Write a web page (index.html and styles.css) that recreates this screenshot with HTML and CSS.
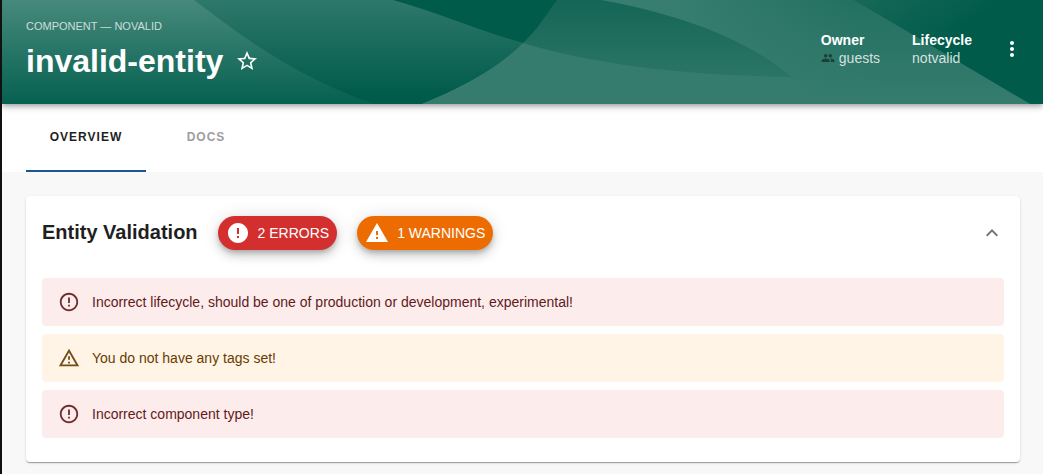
FILE: index.html
```html
<!DOCTYPE html>
<html lang="en">
<head>
<meta charset="utf-8">
<meta name="viewport" content="width=device-width, initial-scale=1">
<title>invalid-entity</title>
<link rel="stylesheet" href="styles.css">
</head>
<body class="page">
<header class="header">
  <svg class="header-waves" viewBox="0 0 1041 104" preserveAspectRatio="none" aria-hidden="true">
    <defs>
      <linearGradient id="left" x1="0" y1="0" x2="0" y2="1"><stop offset="0" stop-color="#47897c"/><stop offset="1" stop-color="#066150"/></linearGradient>
      <linearGradient id="fold" x1="0" y1="0" x2="0" y2="1"><stop offset="0" stop-color="#2e786a"/><stop offset="0.92" stop-color="#005b4b"/></linearGradient>
      <linearGradient id="upper" x1="0" y1="0" x2="0" y2="1"><stop offset="0" stop-color="#146656"/><stop offset="0.7" stop-color="#2a7465"/><stop offset="0.9" stop-color="#337b6d"/></linearGradient>
      <linearGradient id="slope" gradientUnits="userSpaceOnUse" x1="690" y1="60" x2="850" y2="0"><stop offset="0" stop-color="#377e70"/><stop offset="1" stop-color="#237061"/></linearGradient>
      <linearGradient id="slopefoot" x1="0" y1="0" x2="0" y2="1"><stop offset="0" stop-color="#357c6e" stop-opacity="0"/><stop offset="1" stop-color="#357c6e"/></linearGradient>
      <linearGradient id="corner" gradientUnits="userSpaceOnUse" x1="880" y1="-20" x2="935" y2="52"><stop offset="0" stop-color="#176858"/><stop offset="1" stop-color="#005b4b"/></linearGradient>
    </defs>
    <path fill="#005b4b" d="M0 0H1041V104H0z"/>
    <path fill="url(#fold)" d="M180 0H391C440 14 478 31 521 43C494 70 459 88 420 104H180z"/>
    <path fill="url(#left)" d="M0 0H192C236 33 292 77 372 104H0z"/>
    <path fill="url(#upper)" d="M555 0H852L1028 104H420C459 88 494 70 521 43C535 30 544 15 555 0z"/>
    <path fill="#357c6e" d="M521 43C585 62 655 71 730 75L830 79V104H420C459 88 494 70 521 43z"/>
    <path fill="url(#corner)" d="M852 0H1041V104H1028z"/>
    <path fill="url(#slope)" d="M599 0H852L1028 104H818C780 61 720 22 599 0z"/>
    <path fill="url(#slopefoot)" d="M599 0H852L1028 104H818C780 61 720 22 599 0z"/>
  </svg>
  <div class="header-title">
    <p class="kind">COMPONENT — NOVALID</p>
    <div class="name-row">
      <h1 class="name">invalid-entity</h1>
      <button class="icon-button" type="button" aria-label="Add to favorites">
        <svg class="icon" viewBox="0 0 24 24"><path d="M22 9.24l-7.19-.62L12 2 9.19 8.63 2 9.24l5.46 4.73L5.82 21 12 17.27 18.18 21l-1.63-7.03L22 9.24zM12 15.4l-3.76 2.27 1-4.28-3.32-2.88 4.38-.38L12 6.1l1.71 4.04 4.38.38-3.32 2.88 1 4.28L12 15.4z"/></svg>
      </button>
    </div>
  </div>
  <dl class="facts">
    <div class="fact">
      <dt class="fact-label">Owner</dt>
      <dd class="fact-value"><svg class="icon people" viewBox="0 0 24 24" aria-hidden="true"><path d="M16 11c1.66 0 2.99-1.34 2.99-3S17.66 5 16 5c-1.66 0-3 1.34-3 3s1.34 3 3 3zm-8 0c1.66 0 2.99-1.34 2.99-3S9.66 5 8 5C6.34 5 5 6.34 5 8s1.34 3 3 3zm0 2c-2.33 0-7 1.17-7 3.5V19h14v-2.5c0-2.33-4.67-3.5-7-3.5zm8 0c-.29 0-.62.02-.97.05 1.16.84 1.97 1.97 1.97 3.45V19h6v-2.5c0-2.33-4.67-3.5-7-3.5z"/></svg><a class="owner" href="#guests">guests</a></dd>
    </div>
    <div class="fact">
      <dt class="fact-label">Lifecycle</dt>
      <dd class="fact-value">notvalid</dd>
    </div>
  </dl>
  <button class="icon-button" type="button" aria-label="More">
    <svg class="icon" viewBox="0 0 24 24"><path d="M12 8c1.1 0 2-.9 2-2s-.9-2-2-2-2 .9-2 2 .9 2 2 2zm0 2c-1.1 0-2 .9-2 2s.9 2 2 2 2-.9 2-2-.9-2-2-2zm0 6c-1.1 0-2 .9-2 2s.9 2 2 2 2-.9 2-2-.9-2-2-2z"/></svg>
  </button>
</header>
<nav class="tabs">
  <a class="tab tab-active" href="#overview" aria-current="page">OVERVIEW</a>
  <a class="tab" href="#docs">DOCS</a>
</nav>
<main class="content">
  <section class="card">
    <div class="card-head">
      <h2 class="card-title">Entity Validation</h2>
      <button class="chip chip-error" type="button">
        <svg class="icon" viewBox="0 0 24 24" aria-hidden="true"><path d="M12 2C6.48 2 2 6.48 2 12s4.48 10 10 10 10-4.48 10-10S17.52 2 12 2zm1 15h-2v-2h2v2zm0-4h-2V7h2v6z"/></svg>2 ERRORS</button>
      <button class="chip chip-warning" type="button">
        <svg class="icon" viewBox="0 0 24 24" aria-hidden="true"><path d="M1 21h22L12 2 1 21zm12-3h-2v-2h2v2zm0-4h-2v-4h2v4z"/></svg>1 WARNINGS</button>
      <button class="icon-button toggle" type="button" aria-label="Collapse">
        <svg class="icon" viewBox="0 0 24 24"><path d="M12 8l-6 6 1.41 1.41L12 10.83l4.59 4.58L18 14z"/></svg>
      </button>
    </div>
    <ul class="alerts">
      <li class="alert alert-error"><svg class="icon alert-icon" viewBox="0 0 24 24" aria-hidden="true"><path d="M11 15h2v2h-2zm0-8h2v6h-2zm.99-5C6.47 2 2 6.48 2 12s4.47 10 9.99 10C17.52 22 22 17.52 22 12S17.52 2 11.99 2zM12 20c-4.42 0-8-3.58-8-8s3.58-8 8-8 8 3.58 8 8-3.58 8-8 8z"/></svg>Incorrect lifecycle, should be one of production or development, experimental!</li>
      <li class="alert alert-warning"><svg class="icon alert-icon" viewBox="0 0 24 24" aria-hidden="true"><path d="M12 5.99L19.53 19H4.47L12 5.99M12 2L1 21h22L12 2zm1 14h-2v2h2v-2zm0-6h-2v4h2v-4z"/></svg>You do not have any tags set!</li>
      <li class="alert alert-error"><svg class="icon alert-icon" viewBox="0 0 24 24" aria-hidden="true"><path d="M11 15h2v2h-2zm0-8h2v6h-2zm.99-5C6.47 2 2 6.48 2 12s4.47 10 9.99 10C17.52 22 22 17.52 22 12S17.52 2 11.99 2zM12 20c-4.42 0-8-3.58-8-8s3.58-8 8-8 8 3.58 8 8-3.58 8-8 8z"/></svg>Incorrect component type!</li>
    </ul>
  </section>
</main>
</body>
</html>
```
FILE: styles.css
```css
* {
  box-sizing: border-box;
}

.page {
  margin: 0;
  min-height: 100vh;
  border-left: 2px solid #111;
  background: #f8f8f8;
  color: #1f1f1f;
  font-family: "Liberation Sans", Arial, sans-serif;
  font-size: 14px;
  line-height: 20px;
}

.icon {
  display: block;
  flex: none;
  width: 24px;
  height: 24px;
  fill: currentColor;
}

.icon-button {
  padding: 0;
  border: 0;
  background: none;
  color: inherit;
  cursor: pointer;
}

.header {
  position: relative;
  z-index: 1;
  display: flex;
  align-items: center;
  padding: 16px 19px 22px 24px;
  background: #005b4b;
  box-shadow: 0 2px 4px -1px rgba(0, 0, 0, 0.2), 0 4px 5px rgba(0, 0, 0, 0.14), 0 1px 10px rgba(0, 0, 0, 0.12);
  color: #fff;
}

.header-waves {
  position: absolute;
  inset: 0;
  z-index: -1;
  width: 100%;
  height: 100%;
}

.header-title {
  flex: 1;
}

.kind {
  margin: 0 0 4px;
  color: rgba(255, 255, 255, 0.75);
  font-size: 11px;
}

.name-row {
  display: flex;
  align-items: center;
  gap: 12px;
}

.name {
  margin: 0;
  font-size: 32px;
  line-height: 42px;
}

.facts {
  display: flex;
  gap: 32px;
  margin: 0 28px 0 0;
}

.fact-label {
  line-height: 18px;
  font-weight: bold;
}

.fact-value {
  display: flex;
  align-items: center;
  gap: 4px;
  margin: 0;
  line-height: 18px;
  color: rgba(255, 255, 255, 0.8);
}

.people {
  width: 14px;
  height: 14px;
  color: #1b4039;
}

.owner {
  color: inherit;
  text-decoration: none;
}

.tabs {
  display: flex;
  padding: 0 24px;
  background: #fff;
}

.tab {
  min-width: 120px;
  padding: 23px 16px;
  border-bottom: 2px solid transparent;
  color: #9e9e9e;
  font-size: 12px;
  font-weight: bold;
  letter-spacing: 1px;
  text-align: center;
  text-decoration: none;
}

.tab-active {
  border-color: #1f5493;
  color: #1f1f1f;
}

.content {
  padding: 24px 23px 12px 24px;
}

.card {
  padding: 20px 16px 24px;
  border-radius: 4px;
  background: #fff;
  box-shadow: 0 2px 1px -1px rgba(0, 0, 0, 0.2), 0 1px 1px rgba(0, 0, 0, 0.14), 0 1px 3px rgba(0, 0, 0, 0.12);
}

.card-head {
  display: flex;
  align-items: center;
  gap: 20px;
  margin-bottom: 28px;
}

.card-title {
  margin: 0;
  padding-bottom: 2px;
  font-size: 20px;
  line-height: 32px;
}

.chip {
  display: flex;
  align-items: center;
  gap: 8px;
  height: 34px;
  padding: 0 8px;
  border: 0;
  border-radius: 17px;
  box-shadow: 0 3px 5px -1px rgba(0, 0, 0, 0.2), 0 6px 10px rgba(0, 0, 0, 0.14), 0 1px 18px rgba(0, 0, 0, 0.12);
  color: #fff;
  font: inherit;
  cursor: pointer;
}

.chip-error {
  background: #d32f2f;
}

.chip-warning {
  background: #ed6c02;
}

.toggle {
  margin-left: auto;
  color: #757575;
}

.alerts {
  display: grid;
  gap: 8px;
  margin: 0;
  padding: 0;
  list-style: none;
}

.alert {
  display: flex;
  align-items: center;
  gap: 12px;
  min-height: 48px;
  padding: 6px 16px;
  border-radius: 4px;
}

.alert-icon {
  width: 22px;
  height: 22px;
  opacity: 0.9;
}

.alert-error {
  background: #fdecec;
  color: #611a1a;
}

.alert-warning {
  background: #fff4e5;
  color: #663c00;
}
```
